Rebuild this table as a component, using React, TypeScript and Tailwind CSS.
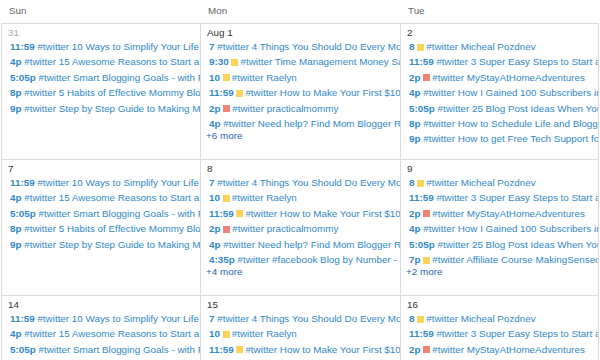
import React from 'react'

type Ev = { t: string; text: string; dot?: 'y' | 'r' }
type Day = { label: string; muted?: boolean; events: Ev[]; more?: number }

const sunday: Ev[] = [
  { t: '11:59', text: '#twitter 10 Ways to Simplify Your Life as a Mom Blogger' },
  { t: '4p', text: '#twitter 15 Awesome Reasons to Start a Blog Today' },
  { t: '5:05p', text: '#twitter Smart Blogging Goals - with Free Printable' },
  { t: '8p', text: '#twitter 5 Habits of Effective Mommy Bloggers' },
  { t: '9p', text: '#twitter Step by Step Guide to Making Money Blogging' },
]

const weeks: Day[][] = [
  [
    { label: '31', muted: true, events: sunday },
    {
      label: 'Aug 1',
      events: [
        { t: '7', text: '#twitter 4 Things You Should Do Every Morning' },
        { t: '9:30', dot: 'y', text: '#twitter Time Management Money Saving Tips' },
        { t: '10', dot: 'y', text: '#twitter Raelyn' },
        { t: '11:59', dot: 'y', text: '#twitter How to Make Your First $100 Blogging' },
        { t: '2p', dot: 'r', text: '#twitter practicalmommy' },
        { t: '4p', text: '#twitter Need help? Find Mom Blogger Resources' },
      ],
      more: 6,
    },
    {
      label: '2',
      events: [
        { t: '8', dot: 'y', text: '#twitter Micheal Pozdnev' },
        { t: '11:59', text: '#twitter 3 Super Easy Steps to Start a Blog' },
        { t: '2p', dot: 'r', text: '#twitter MyStayAtHomeAdventures' },
        { t: '4p', text: '#twitter How I Gained 100 Subscribers in a Week' },
        { t: '5:05p', text: "#twitter 25 Blog Post Ideas When You're Stuck" },
        { t: '8p', text: '#twitter How to Schedule Life and Blogging' },
        { t: '9p', text: '#twitter How to get Free Tech Support for Your Blog' },
      ],
    },
  ],
  [
    { label: '7', events: sunday },
    {
      label: '8',
      events: [
        { t: '7', text: '#twitter 4 Things You Should Do Every Morning' },
        { t: '10', dot: 'y', text: '#twitter Raelyn' },
        { t: '11:59', dot: 'y', text: '#twitter How to Make Your First $100 Blogging' },
        { t: '2p', dot: 'r', text: '#twitter practicalmommy' },
        { t: '4p', text: '#twitter Need help? Find Mom Blogger Resources' },
        { t: '4:35p', text: '#twitter #facebook Blog by Number - a Guide' },
      ],
      more: 4,
    },
    {
      label: '9',
      events: [
        { t: '8', dot: 'y', text: '#twitter Micheal Pozdnev' },
        { t: '11:59', text: '#twitter 3 Super Easy Steps to Start a Blog' },
        { t: '2p', dot: 'r', text: '#twitter MyStayAtHomeAdventures' },
        { t: '4p', text: '#twitter How I Gained 100 Subscribers in a Week' },
        { t: '5:05p', text: "#twitter 25 Blog Post Ideas When You're Stuck" },
        { t: '7p', dot: 'y', text: '#twitter Affiliate Course MakingSenseofCents' },
      ],
      more: 2,
    },
  ],
  [
    { label: '14', events: sunday.slice(0, 3) },
    {
      label: '15',
      events: [
        { t: '7', text: '#twitter 4 Things You Should Do Every Morning' },
        { t: '10', dot: 'y', text: '#twitter Raelyn' },
        { t: '11:59', dot: 'y', text: '#twitter How to Make Your First $100 Blogging' },
      ],
    },
    {
      label: '16',
      events: [
        { t: '8', dot: 'y', text: '#twitter Micheal Pozdnev' },
        { t: '11:59', text: '#twitter 3 Super Easy Steps to Start a Blog' },
        { t: '2p', dot: 'r', text: '#twitter MyStayAtHomeAdventures' },
      ],
    },
  ],
]

const Event = ({ ev }: { ev: Ev }) => (
  <div className="pl-[8px] leading-[15.4px] whitespace-nowrap overflow-hidden text-[#3189c9]">
    <span className="font-bold">{ev.t}</span>{' '}
    {ev.dot === 'y' && <span className="inline-block w-[7px] h-[7px] mr-[2px] align-[-0.5px] bg-[#fbd45a]" />}
    {ev.dot === 'r' && <span className="inline-block w-[7px] h-[7px] mr-[2px] align-[-0.5px] bg-[#f2837a]" />}
    {ev.text}
  </div>
)

const App = () => {
  return (
    <div className="w-[600px] h-[360px] overflow-hidden bg-white text-[9.85px] font-['Liberation_Sans',Arial,sans-serif]">
      <div className="ml-px grid grid-cols-[199px_200px_198px] pl-px h-[23px] items-center text-[#666]">
        <div className="pl-[7px]">Sun</div>
        <div className="pl-[7px]">Mon</div>
        <div className="pl-[7px]">Tue</div>
      </div>
      <div className="ml-px w-[598px] border-l border-t border-[#dcdcdc]">
        {weeks.map((week, i) => (
          <div key={i} className="grid grid-cols-[199px_200px_198px] h-[136px] border-b border-[#dcdcdc]">
            {week.map((day, j) => (
              <div key={j} className="border-r border-[#dcdcdc] pt-[3px] overflow-hidden">
                <div className={`pl-[6px] leading-[12px] ${day.muted ? 'text-[#aaa]' : 'text-[#333]'}`}>{day.label}</div>
                {day.events.map((ev, k) => (
                  <Event key={k} ev={ev} />
                ))}
                {day.more && (
                  <div className="pl-[5px] leading-[10px] text-[#2b63b8]">+{day.more} more</div>
                )}
              </div>
            ))}
          </div>
        ))}
      </div>
    </div>
  )
}

export default App
